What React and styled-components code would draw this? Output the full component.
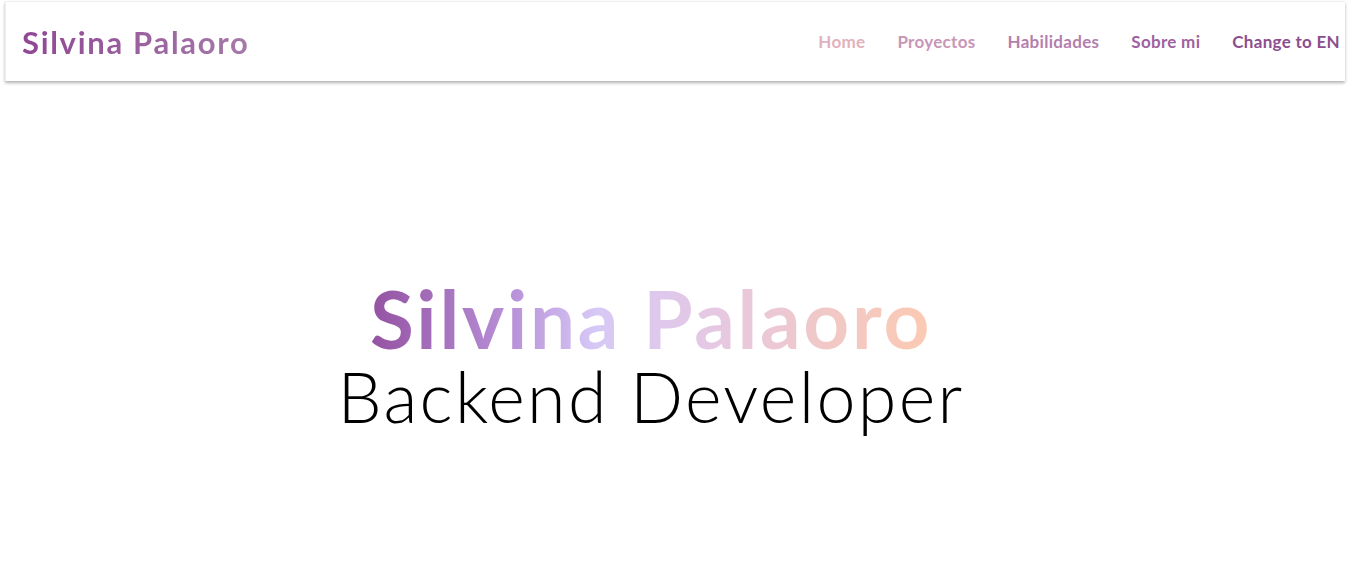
import styled, { createGlobalStyle } from 'styled-components';

const GlobalStyle = createGlobalStyle`
  body {
    margin: 0;
    background: #ffffff;
    font-family: Lato, "Noto Sans", sans-serif;
  }
`;

const Page = styled.div`
  width: 1350px;
  height: 587px;
  overflow: hidden;
  background: #ffffff;
`;

const Navbar = styled.nav`
  margin: 1px 5px 0;
  height: 80px;
  display: flex;
  align-items: center;
  justify-content: space-between;
  padding: 0 5px 0 16px;
  border-top: 1px solid #f0f0f0;
  border-left: 1px solid #f0f0f0;
  box-shadow: 0 2px 3px rgba(0, 0, 0, 0.3);
  box-sizing: border-box;
`;

const Brand = styled.a`
  font-size: 31px;
  font-weight: 700;
  letter-spacing: 1.7px;
  background: linear-gradient(90deg, #8f4794, #a57aa8);
  -webkit-background-clip: text;
  background-clip: text;
  color: transparent;
  text-decoration: none;
`;

const Links = styled.ul`
  display: flex;
  gap: 32px;
  list-style: none;
  margin: 0;
  padding: 0;
`;

const NavLink = styled.a`
  font-size: 17px;
  font-weight: 700;
  letter-spacing: 0.3px;
  color: ${(p) => p.$color};
  text-decoration: none;
`;

const Hero = styled.section`
  height: 500px;
  display: flex;
  flex-direction: column;
  align-items: center;
  justify-content: center;
  padding: 50px 48px 0 0;
  box-sizing: border-box;
`;

const Name = styled.h1`
  margin: 0;
  font-size: 80px;
  font-weight: 700;
  line-height: 1;
  letter-spacing: 2.7px;
  background: linear-gradient(90deg, #9452a2 0%, #b890d8 25%, #d6c8f6 40%, #e6c8e2 62%, #f0c8c8 80%, #fccab2 100%);
  -webkit-background-clip: text;
  background-clip: text;
  color: transparent;
`;

const Role = styled.h2`
  margin: 0;
  font-size: 70px;
  font-weight: 300;
  line-height: 1.1;
  letter-spacing: 2.3px;
  color: #000000;
`;

const links = [
  { label: 'Home', color: '#e2b2bc' },
  { label: 'Proyectos', color: '#c896b6' },
  { label: 'Habilidades', color: '#b47fae' },
  { label: 'Sobre mi', color: '#a0629f' },
  { label: 'Change to EN', color: '#8c4e8e' },
];

export default function App() {
  return (
    <Page>
      <GlobalStyle />
      <Navbar>
        <Brand href="#">Silvina Palaoro</Brand>
        <Links>
          {links.map((l) => (
            <li key={l.label}>
              <NavLink href="#" $color={l.color}>{l.label}</NavLink>
            </li>
          ))}
        </Links>
      </Navbar>
      <Hero>
        <Name>Silvina Palaoro</Name>
        <Role>Backend Developer</Role>
      </Hero>
    </Page>
  );
}
